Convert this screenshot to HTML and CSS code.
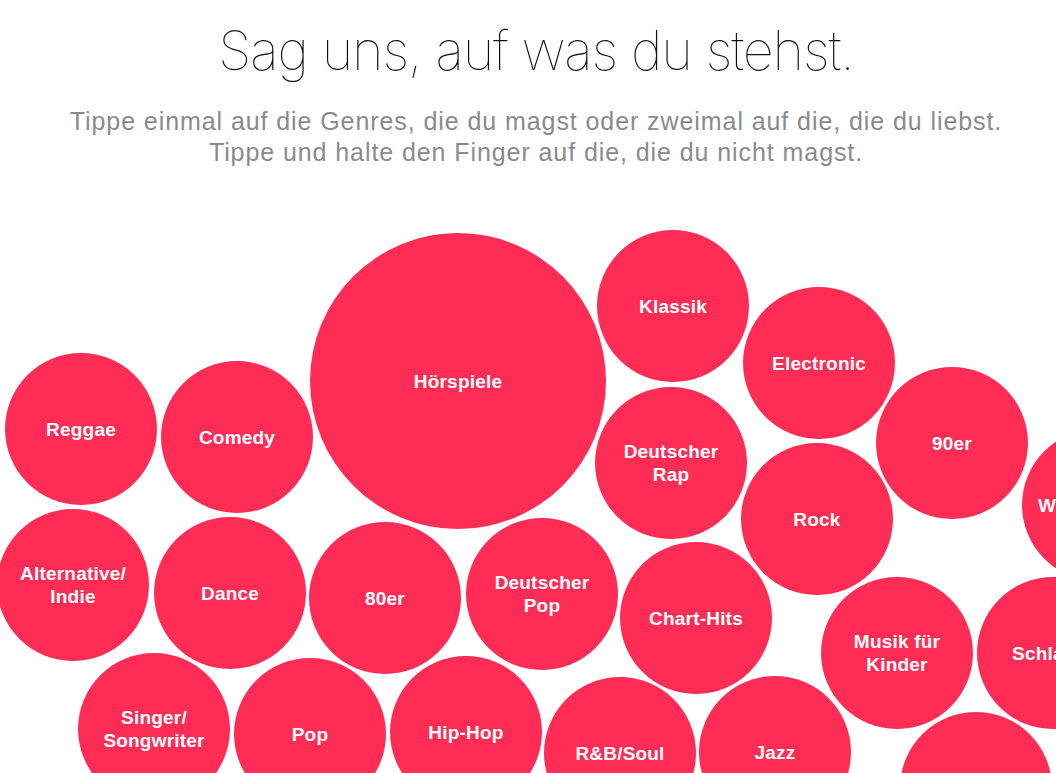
FILE: index.html
```html
<!DOCTYPE html>
<html lang="de">
<head>
<meta charset="utf-8">
<title>Genres</title>
<link rel="stylesheet" href="styles.css">
</head>
<body>
<header class="intro">
  <h1 class="title">Sag uns, auf was du stehst.</h1>
  <p class="subtitle">Tippe einmal auf die Genres, die du magst oder zweimal auf die, die du liebst.<br>Tippe und halte den Finger auf die, die du nicht magst.</p>
</header>
<main class="canvas">
  <div class="bubble" style="left:5px;top:153px"><span>Reggae</span></div>
  <div class="bubble" style="left:161px;top:161px"><span>Comedy</span></div>
  <div class="bubble big" style="left:310px;top:33px"><span>Hörspiele</span></div>
  <div class="bubble" style="left:597px;top:30px"><span>Klassik</span></div>
  <div class="bubble" style="left:743px;top:87px"><span>Electronic</span></div>
  <div class="bubble" style="left:876px;top:167px"><span>90er</span></div>
  <div class="bubble" style="left:1022px;top:229px"><span>Weihnachten</span></div>
  <div class="bubble" style="left:595px;top:187px"><span>Deutscher<br>Rap</span></div>
  <div class="bubble" style="left:741px;top:243px"><span>Rock</span></div>
  <div class="bubble" style="left:-3px;top:309px"><span>Alternative/<br>Indie</span></div>
  <div class="bubble" style="left:154px;top:317px"><span>Dance</span></div>
  <div class="bubble" style="left:309px;top:322px"><span>80er</span></div>
  <div class="bubble" style="left:466px;top:318px"><span>Deutscher<br>Pop</span></div>
  <div class="bubble" style="left:620px;top:342px"><span>Chart-Hits</span></div>
  <div class="bubble" style="left:821px;top:377px"><span>Musik für<br>Kinder</span></div>
  <div class="bubble" style="left:977px;top:377px"><span>Schlager</span></div>
  <div class="bubble" style="left:78px;top:453px"><span>Singer/<br>Songwriter</span></div>
  <div class="bubble" style="left:234px;top:458px"><span>Pop</span></div>
  <div class="bubble" style="left:390px;top:456px"><span>Hip-Hop</span></div>
  <div class="bubble" style="left:544px;top:477px"><span>R&amp;B/Soul</span></div>
  <div class="bubble" style="left:699px;top:476px"><span>Jazz</span></div>
  <div class="bubble" style="left:900px;top:512px"><span>Country</span></div>
</main>
</body>
</html>
```
FILE: styles.css
```css
html, body {
  margin: 0;
  padding: 0;
  background: #ffffff;
  width: 1056px;
  height: 773px;
  overflow: hidden;
}

body {
  font-family: "Liberation Sans", Arial, sans-serif;
}

.intro {
  height: 200px;
  display: flex;
  flex-direction: column;
  align-items: center;
  box-sizing: border-box;
  padding: 18px 0 0 16px;
}

.title {
  margin: 0;
  font-family: Inter, "Liberation Sans", sans-serif;
  font-weight: 100;
  font-size: 54px;
  line-height: 66px;
  letter-spacing: -1.15px;
  color: #111111;
}

.subtitle {
  margin: 22px 0 0;
  font-family: "Liberation Sans", Arial, sans-serif;
  font-size: 25px;
  line-height: 31px;
  letter-spacing: 0.92px;
  color: #8a8a8e;
  text-align: center;
}

.canvas {
  position: relative;
  height: 573px;
  overflow: hidden;
}

.bubble {
  position: absolute;
  width: 152px;
  height: 152px;
  border-radius: 50%;
  background: #ff2d55;
  display: flex;
  align-items: center;
  justify-content: center;
  text-align: center;
  color: #ffffff;
  font-family: "Liberation Sans", Arial, sans-serif;
  font-weight: bold;
  font-size: 19px;
  line-height: 23px;
  letter-spacing: 0.2px;
}

.bubble.big {
  width: 296px;
  height: 296px;
}
```
